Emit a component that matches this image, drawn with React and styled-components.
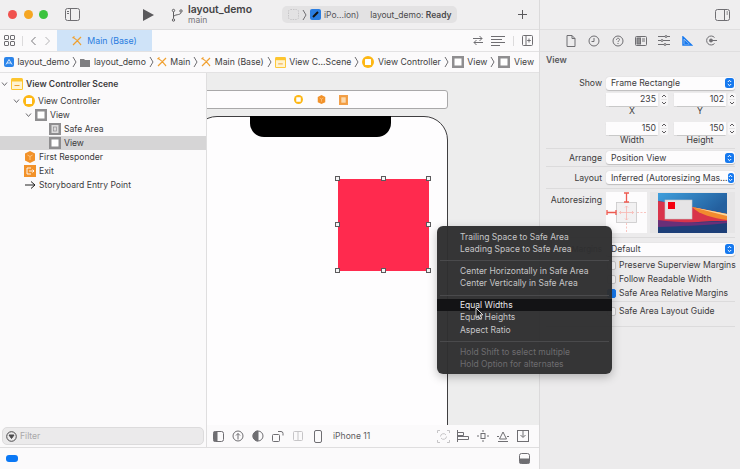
import React from 'react';
import styled, { createGlobalStyle } from 'styled-components';

const GlobalStyle = createGlobalStyle`
  html, body {
    margin: 0;
    padding: 0;
    background: #fff;
  }

  body {
    font-family: Inter, "Liberation Sans", sans-serif;
    font-size: 9px;
    color: #3c3b3d;
    overflow: hidden;
  }
`;

const Window = styled.div`
  position: relative;
  display: flex;
  width: 740px;
  height: 469px;
  overflow: hidden;
`;

const Main = styled.div`
  display: flex;
  flex-direction: column;
  width: 539px;
  border-right: 1px solid #dbdadb;
`;

/* toolbar */
const Toolbar = styled.div`
  display: flex;
  align-items: center;
  flex: none;
  height: 29px;
  background: #f0eff0;
  border-bottom: 1px solid #dfdedf;
`;

const Light = styled.span`
  width: 9px;
  height: 9px;
  margin-right: 6.5px;
  border-radius: 50%;
  background: ${(p) => p.$color};
`;

const Lights = styled.div`
  display: flex;
  padding-left: 8px;
  width: 57px;
`;

const PlayButton = styled.svg`
  margin: 0 17px 0 63px;
`;

const ProjectName = styled.div`
  display: flex;
  flex-direction: column;
  width: 94px;
  margin-left: 5px;
  font-size: 10.4px;
  font-weight: 600;
  line-height: 11px;
  color: #444345;

  small {
    font-size: 8.5px;
    font-weight: 400;
    color: #77767a;
  }
`;

const Status = styled.div`
  display: flex;
  align-items: center;
  width: 175px;
  height: 17px;
  padding-left: 6px;
  box-sizing: border-box;
  border-radius: 5px;
  background: #e3e2e3;
  font-size: 8.5px;
  color: #4b4a4c;
  gap: 3px;

  b {
    font-weight: 600;
  }
`;

const StatusApp = styled.span`
  margin-right: 8px;
  color: #56555a;
`;

const AddButton = styled.span`
  display: flex;
  margin-left: auto;
  margin-right: 12px;
`;

/* tab row */
const TabRow = styled.div`
  display: flex;
  align-items: center;
  flex: none;
  height: 21px;
  padding-left: 4px;
  background: #fbfafb;
  border-bottom: 1px solid #e3e2e3;
`;

const TabTools = styled.div`
  display: flex;
  align-items: center;
  width: 53px;
  gap: 7px;
`;

const VLine = styled.span`
  width: 1px;
  height: 10px;
  background: #dcdbdc;
`;

const Tab = styled.div`
  display: flex;
  align-items: center;
  justify-content: center;
  gap: 5px;
  width: 95px;
  height: 21px;
  background: #cfe3f8;
  color: #2b7de0;
  font-size: 8.8px;
`;

const RightTools = styled.div`
  display: flex;
  align-items: center;
  gap: 8px;
  margin-left: auto;
  margin-right: 6px;
`;

/* jump bar */
const JumpBar = styled.div`
  display: flex;
  align-items: center;
  flex: none;
  height: 20px;
  padding-left: 4px;
  gap: 3px;
  background: #fbfafb;
  border-bottom: 1px solid #e3e2e3;
  font-size: 8.7px;
  white-space: nowrap;
  color: #3f3e40;
  overflow: hidden;
`;

const Crumb = styled.span`
  display: inline-flex;
  align-items: center;
  gap: 3.5px;
`;

const Body = styled.div`
  display: flex;
  flex: 1;
  min-height: 0;
`;

/* outline */
const Outline = styled.div`
  display: flex;
  flex-direction: column;
  width: 206px;
  flex: none;
  background: #fbfafb;
  border-right: 1px solid #dfdedf;
`;

const Tree = styled.div`
  flex: 1;
  padding-top: 1px;
`;

const TreeRow = styled.div`
  display: flex;
  align-items: center;
  height: ${(p) => (p.$scene ? 20 : 14)}px;
  padding-left: ${(p) => p.$indent}px;
  gap: 3px;
  font-size: 8.6px;
  font-weight: ${(p) => (p.$scene ? 600 : 400)};
  background: ${(p) => (p.$selected ? '#d6d5d6' : 'transparent')};
  color: #3c3b3d;
`;

const FilterBar = styled.div`
  flex: none;
  height: 22px;
  padding: 2px 2px 1px;
  box-sizing: border-box;
`;

const FilterField = styled.div`
  display: flex;
  align-items: center;
  gap: 3px;
  height: 18px;
  padding-left: 3px;
  border: 1px solid #dcdbdc;
  border-radius: 5px;
  box-sizing: border-box;
  background: #ebeaeb;
  color: #a9a8aa;
  font-size: 8.6px;
`;

/* canvas */
const CanvasColumn = styled.div`
  display: flex;
  flex-direction: column;
  flex: 1;
  min-width: 0;
`;

const Canvas = styled.div`
  position: relative;
  flex: 1;
  overflow: hidden;
  background: #ededed;
`;

const SceneDock = styled.div`
  position: absolute;
  left: -20px;
  top: 17px;
  width: 261px;
  height: 19px;
  padding-left: 106px;
  box-sizing: border-box;
  display: flex;
  align-items: center;
  gap: 13.5px;
  background: #fdfcfd;
  border: 1px solid #a9a8a9;
  border-radius: 3px;
`;

const Phone = styled.div`
  position: absolute;
  left: -14px;
  top: 43px;
  width: 255px;
  height: 360px;
  box-sizing: border-box;
  background: #fefdfe;
  border: 1px solid #3f3e40;
  border-radius: 24px;
`;

const Notch = styled.div`
  position: absolute;
  left: 56px;
  top: -1px;
  width: 141px;
  height: 21px;
  background: #000;
  border-radius: 0 0 14px 14px;
`;

const RedView = styled.div`
  position: absolute;
  left: 144px;
  top: 62px;
  width: 91px;
  height: 92px;
  background: #ff2a4e;
`;

const Handle = styled.span`
  position: absolute;
  left: ${(p) => p.$x}%;
  top: ${(p) => p.$y}%;
  width: 3px;
  height: 3px;
  margin: -3px 0 0 -3px;
  background: #f4f3f4;
  border: 1px solid #5b5a5c;
`;

const CanvasBar = styled.div`
  display: flex;
  align-items: center;
  flex: none;
  height: 22px;
  padding: 0 6px 0 1px;
  background: #fbfafb;
  font-size: 8.6px;
  color: #5d5c5f;
`;

const BarSlot = styled.span`
  display: flex;
  justify-content: center;
  width: 20px;
`;

const DeviceName = styled.span`
  margin-left: 5px;
  margin-right: auto;
`;

const DebugBar = styled.div`
  display: flex;
  align-items: center;
  justify-content: space-between;
  flex: none;
  height: 21px;
  padding: 0 9px 0 6px;
  background: #fbfafb;
  border-top: 1px solid #dfdedf;
`;

const BluePill = styled.span`
  width: 12px;
  height: 7px;
  border-radius: 3px;
  background: #0a78f5;
`;

/* inspector */
const Inspector = styled.div`
  flex: 1;
  background: #ecebec;
  color: #3c3b3d;
  font-size: 8.7px;
`;

const InspectorHead = styled.div`
  display: flex;
  align-items: center;
  justify-content: flex-end;
  height: 29px;
  padding-right: 10px;
  background: #efeeef;
  border-bottom: 1px solid #dfdedf;
`;

const InspectorTabs = styled.div`
  display: flex;
  align-items: center;
  height: 21px;
  padding-left: 19.5px;
  border-bottom: 1px solid #dfdedf;
`;

const InspectorTab = styled.span`
  display: flex;
  justify-content: center;
  width: 23.3px;
`;

const SectionTitle = styled.div`
  padding: 3px 0 0 6px;
  height: 20px;
  font-weight: 600;
  color: #5a595c;
`;

const FormRow = styled.div`
  display: grid;
  grid-template-columns: 62px 129px;
  column-gap: 4px;
  align-items: center;
  height: ${(p) => p.$height}px;
`;

const Label = styled.span`
  text-align: right;
  color: #3c3b3d;
`;

const Select = styled.div`
  display: flex;
  align-items: center;
  justify-content: space-between;
  height: 13px;
  padding: 0 1px 0 5px;
  box-sizing: border-box;
  background: #fdfcfd;
  border-radius: 3px;
  box-shadow: 0 0.5px 1px rgba(0, 0, 0, 0.2);
  white-space: nowrap;
`;

const SelectArrow = styled.span`
  display: flex;
  align-items: center;
  justify-content: center;
  width: 9px;
  height: 10px;
  border-radius: 2.5px;
  background: #1679ef;
`;

const NumberGrid = styled.div`
  display: grid;
  grid-template-columns: 62px 52px 16px 52px 12px;
  column-gap: 0;
  margin-left: 4px;
  margin-top: ${(p) => p.$top}px;
  align-items: center;
  justify-items: center;
`;

const NumberField = styled.div`
  grid-column: ${(p) => p.$column};
  justify-self: stretch;
  height: 13px;
  line-height: 13px;
  padding-right: 2px;
  box-sizing: border-box;
  text-align: right;
  background: #fdfcfd;
  box-shadow: 0 0.5px 1px rgba(0, 0, 0, 0.15);
`;

const Stepper = styled.span`
  display: flex;
  justify-content: center;
  justify-self: start;
  margin-left: 2px;
`;

const FieldCaption = styled.span`
  grid-column: ${(p) => p.$column};
  grid-row: 2;
  line-height: 10px;
`;

const Divider = styled.div`
  height: 1px;
  margin: ${(p) => p.$margin || '0 5px 0 6px'};
  background: #dcdbdc;
`;

const AutoRow = styled.div`
  display: grid;
  grid-template-columns: 62px 42px 85px;
  column-gap: 2px;
  height: 46px;
  padding-top: 3px;
  box-sizing: border-box;
`;

const AutoLabel = styled(Label)`
  padding-top: 3px;
`;

const AutoBox = styled.div`
  width: 41px;
  height: 41px;
  margin-left: 2px;
  background: #fdfcfd;
`;

const PreviewBox = styled.div`
  display: flex;
  justify-content: center;
  align-items: center;
  width: 85px;
  height: 41px;
  margin-left: 2px;
  background: #e6e5e6;
`;

const MarginRow = styled(FormRow)`
  padding-top: 2px;
  box-sizing: border-box;
`;

const MarginLabel = styled(Label)`
  font-size: 8px;
`;

const CheckRow = styled.div`
  display: flex;
  align-items: center;
  gap: 3px;
  height: 14px;
  padding-left: 67px;
  font-size: 8.6px;
  white-space: nowrap;
`;

const CheckBox = styled.span`
  display: block;
  width: 7px;
  height: 7px;
  border-radius: 2px;
  background: ${(p) => (p.$checked ? '#1679ef' : '#fdfcfd')};
  border: 1px solid ${(p) => (p.$checked ? '#1679ef' : '#c9c8c9')};
`;

/* popup menu */
const Menu = styled.div`
  position: absolute;
  left: 437px;
  top: 226px;
  width: 175px;
  height: 148px;
  padding-top: 4.5px;
  box-sizing: border-box;
  border-radius: 6px;
  background: rgba(46, 46, 48, 0.97);
  box-shadow: 0 3px 10px rgba(0, 0, 0, 0.25);
  color: #c6c5c7;
  font-size: 8.5px;
`;

const MenuItem = styled.div`
  height: 12.4px;
  line-height: 12.4px;
  padding-left: 23px;
  white-space: nowrap;
  color: ${(p) => (p.$disabled ? '#6d6c6f' : p.$active ? '#e9e8ea' : '#c6c5c7')};
  background: ${(p) => (p.$active ? '#131315' : 'transparent')};
`;

const MenuLine = styled.div`
  height: 1px;
  margin: 5px 3px 3.5px;
  background: #4a4a4c;
`;

const Cursor = styled.svg`
  position: absolute;
  left: 475px;
  top: 307px;
`;

const Icon = ({ w = 12, h = 12, box, children, color = '#6f6e72' }) => (
  <svg width={w} height={h} viewBox={box || `0 0 ${w} ${h}`} fill="none" stroke={color} strokeWidth="1" style={{ flex: 'none', display: 'block' }}>
    {children}
  </svg>
);

const SplitIcon = () => (
  <Icon w={15} h={13}>
    <rect x="0.5" y="0.5" width="14" height="12" rx="2" />
    <path d="M5.5 1v11" />
    <path d="M2 3.5h2M2 5.5h2" />
  </Icon>
);

const BranchIcon = () => (
  <Icon w={12} h={14} color="#5d5c5f">
    <circle cx="2.5" cy="2.5" r="1.2" />
    <circle cx="2.5" cy="12" r="1.2" />
    <circle cx="10" cy="3" r="1.2" />
    <path d="M2.5 4v6.5M2.5 9c0-3 7.5-1.5 7.5-4.5" />
  </Icon>
);

const Sep = () => (
  <Icon w={5} h={12} color="#6f6e72">
    <path d="M1 1l3 5-3 5" />
  </Icon>
);

const Chevron = ({ dir = 'left', color = '#77767a' }) => (
  <Icon w={7} h={10} color={color}>
    <path d={dir === 'left' ? 'M5.5 1L1.5 5l4 4' : 'M1.5 1l4 4-4 4'} />
  </Icon>
);

const XCodeX = ({ size = 10 }) => (
  <Icon w={size} h={size} box="0 0 10 10" color="#f0a030">
    <path d="M1 1.5c3 1 5 4 8 7.5M9 1L1 9M.5 2l2-1.5" strokeWidth="1.2" />
  </Icon>
);

const SceneIcon = ({ size = 12 }) => (
  <svg width={size} height={size} viewBox="0 0 12 12" style={{ flex: 'none', display: 'block' }}>
    <rect x="0" y="0" width="12" height="12" rx="1.5" fill="#fdc52f" />
    <rect x="1" y="3.5" width="10" height="7.5" fill="#fff3cf" />
    <path d="M3.5 7.5h5" stroke="#f0a030" strokeWidth="1" />
  </svg>
);

const ControllerIcon = ({ size = 12 }) => (
  <svg width={size} height={size} viewBox="0 0 12 12" style={{ flex: 'none', display: 'block' }}>
    <circle cx="6" cy="6" r="6" fill="#fdb714" />
    <rect x="3" y="3" width="6" height="6" rx="0.5" fill="#fff" />
  </svg>
);

const ViewIcon = ({ size = 12 }) => (
  <svg width={size} height={size} viewBox="0 0 12 12" style={{ flex: 'none', display: 'block' }}>
    <rect width="12" height="12" fill="#8f8e90" />
    <rect x="2.5" y="2.5" width="7" height="7" fill="#fff" />
  </svg>
);

const SafeAreaIcon = () => (
  <svg width="12" height="12" viewBox="0 0 12 12" style={{ flex: 'none', display: 'block' }}>
    <rect width="12" height="12" fill="#8f8e90" />
    <rect x="2.5" y="2" width="7" height="8" fill="#dcdbdc" />
    <rect x="4.5" y="4" width="3" height="4" fill="none" stroke="#8f8e90" strokeWidth="0.7" />
  </svg>
);

const ResponderIcon = ({ size = 12 }) => (
  <svg width={size} height={size} viewBox="0 0 12 12" style={{ flex: 'none', display: 'block' }}>
    <path d="M6 0l5 2.5v7L6 12 1 9.5v-7z" fill="#f2922a" />
    <path d="M3.5 4L6 5.500 8.500 4M6 5.500V9" stroke="#ffd9a8" strokeWidth="0.7" fill="none" />
  </svg>
);

const ExitIcon = ({ size = 12 }) => (
  <svg width={size} height={size} viewBox="0 0 12 12" style={{ flex: 'none', display: 'block' }}>
    <rect width="12" height="12" fill="#f2922a" />
    <path d="M7 3H3v6h4M5 6h5M8.5 4.500L10 6 8.5 7.500" stroke="#fff" strokeWidth="0.9" fill="none" />
  </svg>
);

// the dock's third icon is a dotted storyboard square, not the exit arrow
const DockSquareIcon = () => (
  <svg width="9" height="10" viewBox="0 0 9 10" style={{ flex: 'none', display: 'block' }}>
    <rect width="9" height="10" fill="#f2a04a" />
    <rect x="2" y="2" width="5" height="6" fill="#fbd9ae" stroke="#f2922a" strokeWidth="0.5" />
  </svg>
);

const Disclosure = () => (
  <Icon w={7} h={6} color="#6f6e72">
    <path d="M1 1.5l2.500 3 2.500-3" />
  </Icon>
);

const UpDown = ({ color = '#fff' }) => (
  <svg width="5" height="8" viewBox="0 0 5 8" fill="none" stroke={color} strokeWidth="1" style={{ display: 'block' }}>
    <path d="M.8 3L2.5 1.300 4.200 3M.8 5l1.700 1.700L4.200 5" />
  </svg>
);

const StepperIcon = () => (
  <svg width="8" height="13" viewBox="0 0 8 13" style={{ display: 'block' }}>
    <rect width="8" height="13" rx="2" fill="#f7f6f7" />
    <path d="M1 6.5h6" stroke="#dcdbdc" strokeWidth="0.6" />
    <path d="M2 4l2-2 2 2M2 9l2 2 2-2" stroke="#4b4a4c" fill="none" strokeWidth="0.9" />
  </svg>
);

const AutoresizeDrawing = () => (
  <svg width="41" height="41" viewBox="0 0 41 41" fill="none" style={{ display: 'block' }}>
    <rect x="10.5" y="10.5" width="20" height="20" stroke="#c9c8c9" strokeWidth="0.8" fill="#f2f1f2" />
    <path d="M20.5 1v9M18 1h5M18 10h5M1 20.5h9M1 18v5M10 18v5" stroke="#ee5a50" strokeWidth="1.3" />
    <path d="M20.5 14v14M13.5 20.5h14M19 15.5l1.500-1.500 1.500 1.500M19 26.5l1.500 1.500 1.500-1.500M15 19l-1.500 1.500L15 22M26 19l1.500 1.500L26 22" stroke="#f7b5ae" strokeWidth="0.8" />
    <path d="M20.5 31v9M31 20.5h9" stroke="#f7b5ae" strokeWidth="0.8" strokeDasharray="2 1.500" />
  </svg>
);

const Wallpaper = () => (
  <svg width="69" height="40" viewBox="0 0 69 40" style={{ display: 'block' }}>
    <defs>
      <linearGradient id="sky" x1="0" y1="0" x2="1" y2="0.4">
        <stop offset="0" stopColor="#3f9fdc" />
        <stop offset="1" stopColor="#24609f" />
      </linearGradient>
    </defs>
    <rect width="69" height="40" fill="#1d3f78" />
    <path d="M0 0h69v21L30 13 0 8z" fill="url(#sky)" />
    <path d="M0 8l30 5 39 8v7c-24 0-44 2-69 5z" fill="#d9344a" />
    <path d="M34 14l35 7v6c-14-2-27-5-35-13z" fill="#f28a2e" />
    <path d="M34 14l35 7v2z" fill="#f8d9a0" />
    <path d="M0 27c20 3 45 3 69 1v2c-24 3-49 3-69 4z" fill="#6a2f78" />
    <rect x="7" y="7" width="27" height="19" fill="#e6e5e6" stroke="#c9c8c9" strokeWidth="0.6" />
    <rect x="10" y="9" width="7" height="7" fill="#f5000f" />
  </svg>
);

const handles = [
  [0, 0], [50, 0], [100, 0],
  [0, 50], [100, 50],
  [0, 100], [50, 100], [100, 100],
];

const inspectorIcons = [
  <Icon key="file" w={10} h={12}><path d="M1 .5h5l3 3v8H1zM6 .5v3h3" /></Icon>,
  <Icon key="clock" w={12} h={12}><circle cx="6" cy="6" r="5" /><path d="M6 3v3.500H3.500" /></Icon>,
  <Icon key="help" w={12} h={12}><circle cx="6" cy="6" r="5" /><path d="M4.5 4.800c0-2 3-2 3-.2 0 1.200-1.500 1.200-1.500 2.400M6 8v1" /></Icon>,
  <Icon key="id" w={12} h={10}><rect x=".5" y=".5" width="11" height="9" rx="1" /><rect x="2" y="2" width="3.5" height="6" fill="#8f8e90" /><path d="M7 3h3M7 5h3" /></Icon>,
  <Icon key="sliders" w={12} h={11}><path d="M0 1.5h12M0 5.500h12M0 9.500h12" /><circle cx="8" cy="1.5" r="1" fill="#ecebec" /><circle cx="4" cy="5.5" r="1" fill="#ecebec" /><circle cx="7" cy="9.5" r="1" fill="#ecebec" /></Icon>,
  <Icon key="ruler" w={11} h={10} color="#1679ef"><path d="M1 1v8h8.500zM3 5.500v1.800h2z" strokeWidth="1.5" /></Icon>,
  <Icon key="conn" w={12} h={11}><path d="M9.5 2.500a4.500 4.500 0 1 0 0 6" /><circle cx="6" cy="5.5" r="1.5" fill="#6f6e72" /><path d="M6 5.500h6" /></Icon>,
];

const App = () => {
  return (
    <>
      <GlobalStyle />
      <Window>
        <Main>
          <Toolbar>
            <Lights>
              <Light $color="#f0524f" />
              <Light $color="#f5a623" />
              <Light $color="#3cc33f" />
            </Lights>
            <SplitIcon />
            <PlayButton width="11" height="12" viewBox="0 0 11 12">
              <path d="M0 0l11 6-11 6z" fill="#5a595c" />
            </PlayButton>
            <BranchIcon />
            <ProjectName>
              layout_demo
              <small>main</small>
            </ProjectName>
            <Status>
              <Icon w={11} h={11} color="#c6c5c7"><rect x=".5" y=".5" width="10" height="10" rx="2" strokeDasharray="1.500 1" /></Icon>
              <Sep />
              <svg width="11" height="11" viewBox="0 0 11 11">
                <rect width="11" height="11" rx="2" fill="#2a7de1" />
                <path d="M3 8l5-5" stroke="#111" strokeWidth="2" />
              </svg>
              <StatusApp>iPo...ion)</StatusApp>
              <span>layout_demo: <b>Ready</b></span>
            </Status>
            <AddButton>
              <Icon w={9} h={9} color="#5a595c"><path d="M4.5 0v9M0 4.500h9" /></Icon>
            </AddButton>
          </Toolbar>
          <TabRow>
            <TabTools>
              <Icon w={11} h={11}><rect x=".5" y=".5" width="4" height="4" rx=".5" /><rect x="6.5" y=".5" width="4" height="4" rx=".5" /><rect x=".5" y="6.5" width="4" height="4" rx=".5" /><rect x="6.5" y="6.5" width="4" height="4" rx=".5" /></Icon>
              <VLine />
              <Chevron />
              <Chevron dir="right" color="#b5b4b6" />
            </TabTools>
            <Tab>
              <XCodeX />
              Main (Base)
            </Tab>
            <RightTools>
              <Icon w={10} h={11}><path d="M0 3.5h9M6.500 1L9 3.500 6.500 6M10 7.500H1M3.500 5L1 7.500 3.500 10" /></Icon>
              <Icon w={14} h={10}><path d="M0 .5h14M0 3.500h11M0 6.500h14M0 9.500h9" /></Icon>
              <VLine />
              <Icon w={11} h={11}><rect x=".5" y=".5" width="10" height="10" rx="1" /><path d="M4 1v9M7 3.500v4M5.200 5.500h3.600" /></Icon>
            </RightTools>
          </TabRow>
          <JumpBar>
            <Crumb>
              <svg width="10" height="10" viewBox="0 0 10 10"><rect width="10" height="10" rx="2" fill="#2b84ea" /><path d="M2 7.5L5 2.500l3 5M3 6h4" stroke="#fff" strokeWidth=".8" fill="none" /></svg>
              layout_demo
            </Crumb>
            <Sep />
            <Crumb>
              <svg width="10" height="9" viewBox="0 0 10 9"><path d="M0 1h4l1 1h5v7H0z" fill="#7f7e81" /></svg>
              layout_demo
            </Crumb>
            <Sep />
            <Crumb><XCodeX />Main</Crumb>
            <Sep />
            <Crumb><XCodeX />Main (Base)</Crumb>
            <Sep />
            <Crumb><SceneIcon size={11} />View C...Scene</Crumb>
            <Sep />
            <Crumb><ControllerIcon />View Controller</Crumb>
            <Sep />
            <Crumb><ViewIcon />View</Crumb>
            <Sep />
            <Crumb><ViewIcon />View</Crumb>
          </JumpBar>
          <Body>
            <Outline>
              <Tree>
                <TreeRow $scene $indent={1}><Disclosure /><SceneIcon />View Controller Scene</TreeRow>
                <TreeRow $indent={13}><Disclosure /><ControllerIcon />View Controller</TreeRow>
                <TreeRow $indent={25}><Disclosure /><ViewIcon />View</TreeRow>
                <TreeRow $indent={49}><SafeAreaIcon />Safe Area</TreeRow>
                <TreeRow $indent={49} $selected><ViewIcon />View</TreeRow>
                <TreeRow $indent={24}><ResponderIcon />First Responder</TreeRow>
                <TreeRow $indent={24}><ExitIcon />Exit</TreeRow>
                <TreeRow $indent={24}>
                  <Icon w={12} h={10} color="#222"><path d="M1 5h10M7 1.500L11 5 7 8.500" /></Icon>
                  Storyboard Entry Point
                </TreeRow>
              </Tree>
              <FilterBar>
                <FilterField>
                  <Icon w={11} h={11} color="#4b4a4c"><circle cx="5.5" cy="5.5" r="4.8" /><path d="M3 4h5L5.500 7.500z" fill="#4b4a4c" /></Icon>
                  Filter
                </FilterField>
              </FilterBar>
            </Outline>
            <CanvasColumn>
              <Canvas>
                <SceneDock>
                  <ControllerIcon size={9} />
                  <ResponderIcon size={9} />
                  <DockSquareIcon />
                </SceneDock>
                <Phone>
                  <Notch />
                  <RedView>
                    {handles.map(([x, y]) => (
                      <Handle key={`${x}-${y}`} $x={x} $y={y} />
                    ))}
                  </RedView>
                </Phone>
              </Canvas>
              <CanvasBar>
                <BarSlot><Icon w={11} h={11}><rect x=".5" y=".5" width="10" height="10" rx="2" /><rect x="1" y="1" width="3" height="9" fill="#6f6e72" /></Icon></BarSlot>
                <BarSlot><Icon w={12} h={12}><circle cx="6" cy="6" r="5" /><path d="M6 9.500V3.500M4 5.500l2-2 2 2" /></Icon></BarSlot>
                <BarSlot><Icon w={12} h={12}><circle cx="6" cy="6" r="5" /><path d="M6 1a5 5 0 0 0 0 10z" fill="#6f6e72" /></Icon></BarSlot>
                <BarSlot><Icon w={12} h={12}><rect x=".5" y="4.5" width="7" height="7" rx="1" /><path d="M6 1.500h3a2 2 0 0 1 2 2v2" /></Icon></BarSlot>
                <BarSlot><Icon w={10} h={10} color="#c6c5c7"><rect x=".5" y=".5" width="9" height="9" rx="1" /><path d="M5 1v8" /></Icon></BarSlot>
                <BarSlot><Icon w={8} h={13}><rect x=".5" y=".5" width="7" height="12" rx="1.5" /></Icon></BarSlot>
                <DeviceName>iPhone 11</DeviceName>
                <BarSlot><Icon w={13} h={13} color="#c6c5c7"><path d="M.5 3V.5H3M10 .5h2.500V3M12.500 10v2.500H10M3 12.500H.5V10" /><path d="M3.5 6.500a3 3 0 0 1 5.500-1.500M9.500 6.500a3 3 0 0 1-5.500 1.500" /></Icon></BarSlot>
                <BarSlot><Icon w={12} h={12}><path d="M.5 0v12M.5 2.500h6v3h-6M.5 6.500h11v3H.5" /></Icon></BarSlot>
                <BarSlot><Icon w={12} h={12}><rect x="4" y="3.5" width="4" height="5" /><path d="M6 0v2M6 10v2M0 6h2M10 6h2" /></Icon></BarSlot>
                <BarSlot><Icon w={12} h={11}><path d="M6 1l3.500 7h-7zM0 5.500h2M10 5.500h2M1 10.500h10" /></Icon></BarSlot>
                <BarSlot><Icon w={12} h={12}><rect x=".5" y=".5" width="11" height="11" /><path d="M6 1v6M3.500 5L6 7.500 8.500 5" /></Icon></BarSlot>
              </CanvasBar>
            </CanvasColumn>
          </Body>
          <DebugBar>
            <BluePill />
            <Icon w={11} h={11}><rect x=".5" y=".5" width="10" height="10" rx="2" /><rect x="1" y="6" width="9" height="4" fill="#6f6e72" /></Icon>
          </DebugBar>
        </Main>
        <Inspector>
          <InspectorHead>
            <Icon w={15} h={12}><rect x=".5" y=".5" width="14" height="11" rx="2" /><path d="M9.5 1v10M11.500 3h1.500M11.500 5h1.500" /></Icon>
          </InspectorHead>
          <InspectorTabs>
            {inspectorIcons.map((icon) => (
              <InspectorTab key={icon.key}>{icon}</InspectorTab>
            ))}
          </InspectorTabs>
          <SectionTitle>View</SectionTitle>
          <FormRow $height={16}>
            <Label>Show</Label>
            <Select>Frame Rectangle<SelectArrow><UpDown /></SelectArrow></Select>
          </FormRow>
          <NumberGrid $top={2}>
            <NumberField $column={2}>235</NumberField>
            <Stepper><StepperIcon /></Stepper>
            <NumberField $column={4}>102</NumberField>
            <Stepper><StepperIcon /></Stepper>
            <FieldCaption $column={2}>X</FieldCaption>
            <FieldCaption $column={4}>Y</FieldCaption>
          </NumberGrid>
          <NumberGrid $top={6}>
            <NumberField $column={2}>150</NumberField>
            <Stepper><StepperIcon /></Stepper>
            <NumberField $column={4}>150</NumberField>
            <Stepper><StepperIcon /></Stepper>
            <FieldCaption $column={2}>Width</FieldCaption>
            <FieldCaption $column={4}>Height</FieldCaption>
          </NumberGrid>
          <Divider $margin="3px 5px 0 6px" />
          <FormRow $height={17}>
            <Label>Arrange</Label>
            <Select>Position View<SelectArrow><UpDown /></SelectArrow></Select>
          </FormRow>
          <Divider />
          <FormRow $height={21}>
            <Label>Layout</Label>
            <Select>Inferred (Autoresizing Mas...<SelectArrow><UpDown /></SelectArrow></Select>
          </FormRow>
          <Divider />
          <AutoRow>
            <AutoLabel>Autoresizing</AutoLabel>
            <AutoBox><AutoresizeDrawing /></AutoBox>
            <PreviewBox><Wallpaper /></PreviewBox>
          </AutoRow>
          <Divider $margin="2px 5px 0 6px" />
          <MarginRow $height={20}>
            <MarginLabel>Margins</MarginLabel>
            <Select>Default<SelectArrow><UpDown /></SelectArrow></Select>
          </MarginRow>
          <CheckRow><CheckBox />Preserve Superview Margins</CheckRow>
          <CheckRow><CheckBox />Follow Readable Width</CheckRow>
          <CheckRow><CheckBox $checked />Safe Area Relative Margins</CheckRow>
          <Divider $margin="1px 5px 2px 6px" />
          <CheckRow><CheckBox />Safe Area Layout Guide</CheckRow>
          <Divider $margin="8px 5px 0 6px" />
        </Inspector>
        <Menu>
          <MenuItem>Trailing Space to Safe Area</MenuItem>
          <MenuItem>Leading Space to Safe Area</MenuItem>
          <MenuLine />
          <MenuItem>Center Horizontally in Safe Area</MenuItem>
          <MenuItem>Center Vertically in Safe Area</MenuItem>
          <MenuLine />
          <MenuItem $active>Equal Widths</MenuItem>
          <MenuItem>Equal Heights</MenuItem>
          <MenuItem>Aspect Ratio</MenuItem>
          <MenuLine />
          <MenuItem $disabled>Hold Shift to select multiple</MenuItem>
          <MenuItem $disabled>Hold Option for alternates</MenuItem>
        </Menu>
        <Cursor width="9" height="13" viewBox="0 0 9 13">
          <path d="M1 1v9.5l2.300-2 1.700 3.500 1.600-.8-1.700-3.300h3z" fill="#111" stroke="#fff" strokeWidth=".8" />
        </Cursor>
      </Window>
    </>
  );
};

export default App;
